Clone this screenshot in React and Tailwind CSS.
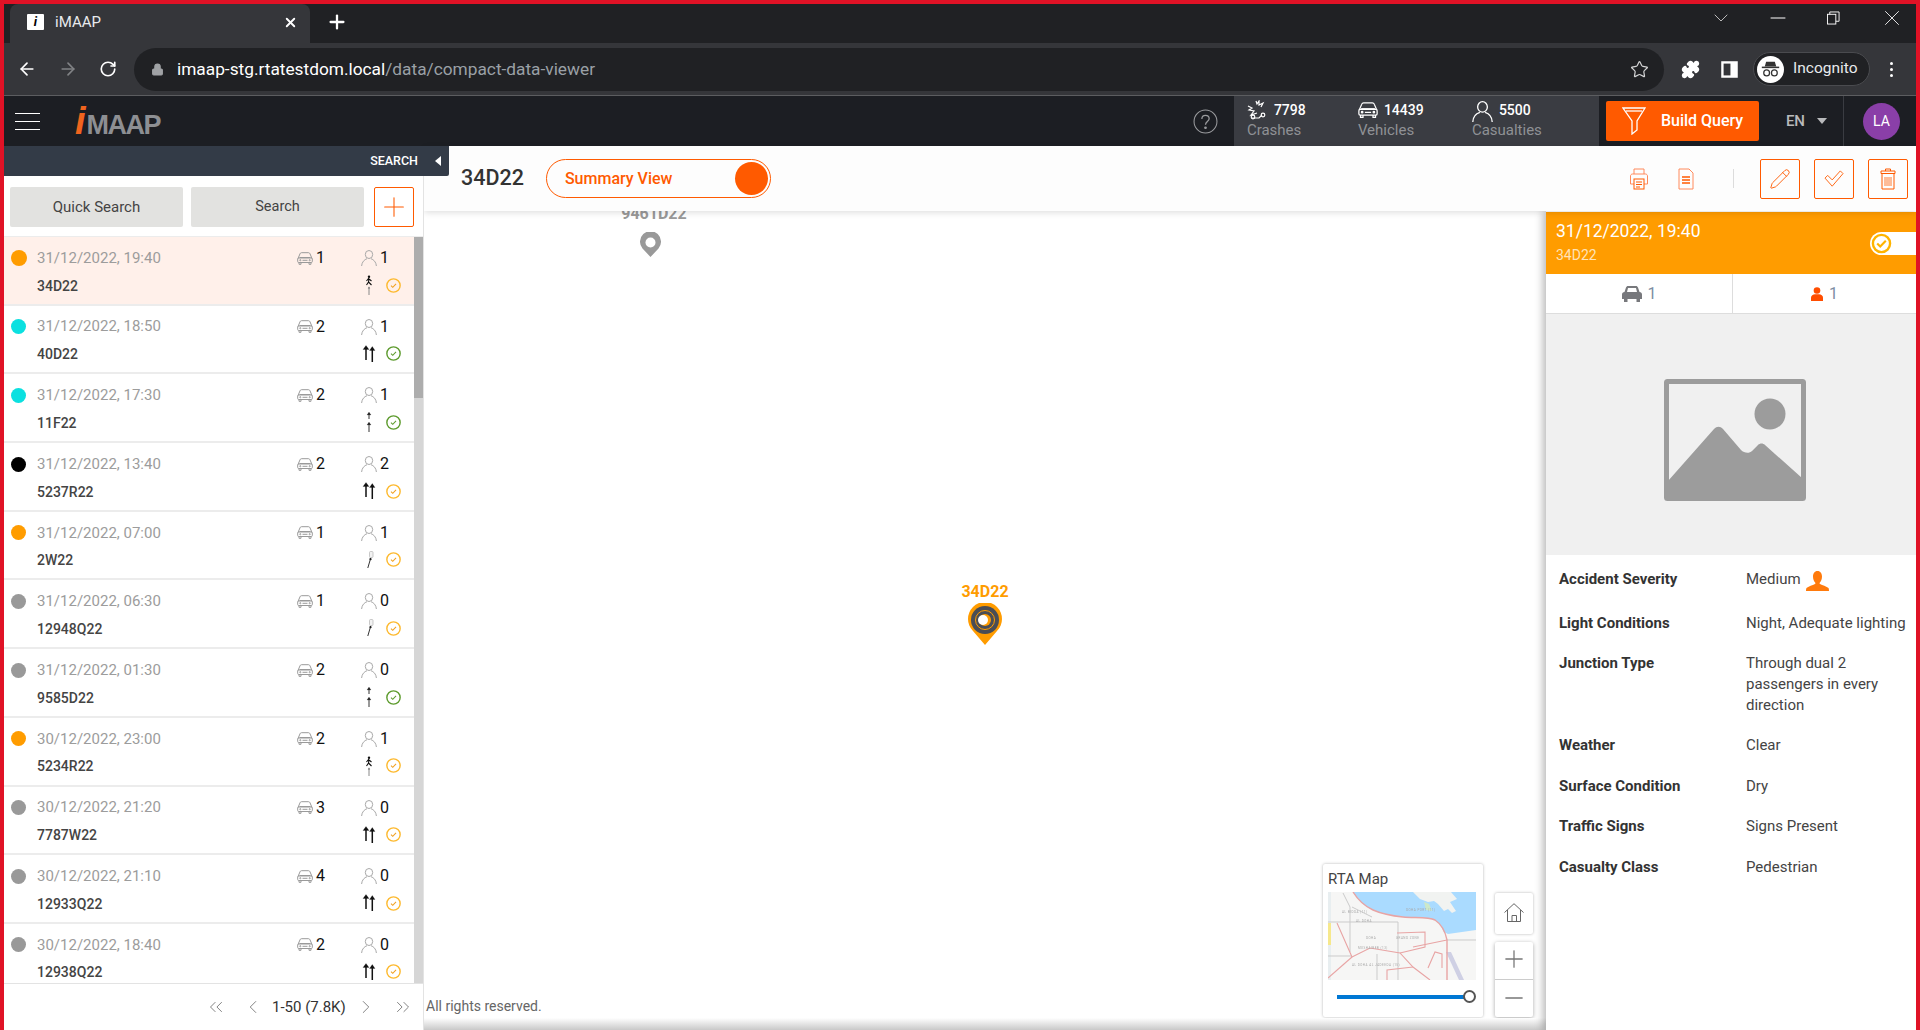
import { ArrowLeft, ArrowRight, RotateCw, Lock, Star, Puzzle, X, Plus, Minus, ChevronDown, ChevronLeft, ChevronRight, ChevronsLeft, ChevronsRight, Pencil } from "lucide-react";

const rows = [
  { dot: "bg-[#ff9c00]", date: "31/12/2022, 19:40", cars: 1, people: 1, id: "34D22", road: "walker", ok: false, active: true },
  { dot: "bg-[#0be0e0]", date: "31/12/2022, 18:50", cars: 2, people: 1, id: "40D22", road: "double", ok: true },
  { dot: "bg-[#0be0e0]", date: "31/12/2022, 17:30", cars: 2, people: 1, id: "11F22", road: "split", ok: true },
  { dot: "bg-black", date: "31/12/2022, 13:40", cars: 2, people: 2, id: "5237R22", road: "double", ok: false },
  { dot: "bg-[#ff9c00]", date: "31/12/2022, 07:00", cars: 1, people: 1, id: "2W22", road: "slant", ok: false },
  { dot: "bg-[#999999]", date: "31/12/2022, 06:30", cars: 1, people: 0, id: "12948Q22", road: "slant", ok: false },
  { dot: "bg-[#999999]", date: "31/12/2022, 01:30", cars: 2, people: 0, id: "9585D22", road: "split", ok: true },
  { dot: "bg-[#ff9c00]", date: "30/12/2022, 23:00", cars: 2, people: 1, id: "5234R22", road: "walker", ok: false },
  { dot: "bg-[#999999]", date: "30/12/2022, 21:20", cars: 3, people: 0, id: "7787W22", road: "double", ok: false },
  { dot: "bg-[#999999]", date: "30/12/2022, 21:10", cars: 4, people: 0, id: "12933Q22", road: "double", ok: false },
  { dot: "bg-[#999999]", date: "30/12/2022, 18:40", cars: 2, people: 0, id: "12938Q22", road: "double", ok: false },
];

const details = [
  ["Light Conditions", "Night, Adequate lighting"],
  ["Junction Type", "Through dual 2 passengers in every direction"],
  ["Weather", "Clear"],
  ["Surface Condition", "Dry"],
  ["Traffic Signs", "Signs Present"],
  ["Casualty Class", "Pedestrian"],
];

function CarOutline({ className, stroke = "#9a9a9a" }) {
  return (
    <svg viewBox="0 0 16 13" className={className} fill="none" stroke={stroke} strokeWidth="1">
      <path d="M1 6.5 3 1.800C3.300 1 3.800.7 4.500.7h7c.7 0 1.200.3 1.500 1.100l2 4.700" />
      <rect x=".7" y="6" width="14.600" height="4.500" rx="1" />
      <path d="M2 10.500v1.800h2v-1.800M12 10.500v1.800h2v-1.800M5.500 8.300h5" />
      <circle cx="3.300" cy="8.200" r=".6" />
      <circle cx="12.700" cy="8.200" r=".6" />
      <path d="M2.500 5.500h11" />
    </svg>
  );
}

function PersonOutline({ className, stroke = "#a8a8a8" }) {
  return (
    <svg viewBox="0 0 16 16" className={className} fill="none" stroke={stroke} strokeWidth="1">
      <ellipse cx="8" cy="4.500" rx="3.700" ry="4" />
      <path d="M.6 16C.8 12 3.500 9.500 6 8.700M15.400 16C15.200 12 12.500 9.500 10 8.700" />
    </svg>
  );
}

function RoadIcon({ type }) {
  if (type === "double") {
    return (
      <svg viewBox="0 0 16 18" className="w-4 h-[18px]" fill="#111" stroke="#111">
        <path d="M2 4.500 5 .5l3 4ZM8.500 5.500l2.800-4 2.700 4Z" strokeWidth=".2" />
        <path d="M5 3v12M11.300 4v13" strokeWidth="1.500" />
      </svg>
    );
  }
  if (type === "split") {
    return (
      <svg viewBox="0 0 16 22" className="w-4 h-[22px]" fill="#222" stroke="#333">
        <path d="M6 4 8 1l2 3ZM6 14l2-3 2 3Z" strokeWidth=".2" />
        <path d="M8 3v5M8 13v8" strokeWidth="1" />
      </svg>
    );
  }
  if (type === "slant") {
    return (
      <svg viewBox="0 0 16 18" className="w-4 h-[18px]">
        <rect x="8.500" y=".5" width="3.500" height="6" rx="1" fill="#f2f2f2" stroke="#bbb" strokeWidth=".8" />
        <circle cx="9.500" cy="8.200" r="1.100" fill="#111" />
        <path d="M9.300 8.500 6.800 17" stroke="#333" strokeWidth="1" fill="none" />
      </svg>
    );
  }
  return (
    <svg viewBox="0 0 16 20" className="w-4 h-5" fill="none" stroke="#111">
      <circle cx="8" cy="1.800" r="1.200" fill="#111" stroke="none" />
      <path d="M8 3.500 7.500 7 5.500 10M7.500 7l3 3M5.500 6l2-2.500 3 2.500" strokeWidth="1.100" />
      <path d="M6.800 13.500 8 11.500l1.200 2Z" fill="#555" stroke="none" />
      <path d="M8 13v7" stroke="#888" strokeWidth="1" />
    </svg>
  );
}

function CheckCircle({ ok }) {
  const c = ok ? "#5d9b2d" : "#fdb92e";
  return (
    <svg viewBox="0 0 16 16" className="w-[15px] h-[15px]" fill="none" stroke={c}>
      <circle cx="8" cy="8" r="7.100" strokeWidth="1.500" />
      <path d="M5.300 8.200 7.200 10 10.700 6.300" strokeWidth="1.100" stroke={ok ? "#5d9b2d" : "#f0a020"} />
    </svg>
  );
}

function Row({ row }) {
  return (
    <div className={`h-[68.7px] shrink-0 border-b-2 border-[#ececec] pl-[7px] pr-[13px] ${row.active ? "bg-[#fff0ea]" : "bg-white"}`}>
      <div className="flex items-center h-[22px] mt-[10px]">
        <div className="w-[26px] shrink-0">
          <div className={`rounded-full ${row.active ? "w-[16px] h-[16px]" : "w-[15px] h-[15px]"} ${row.dot}`} />
        </div>
        <span className="w-[260px] shrink-0 text-[15px] text-[#9c9c9c]">{row.date}</span>
        <CarOutline className="w-4 h-[13px] shrink-0" />
        <span className="w-[48px] pl-[3px] shrink-0 text-[16px] text-[#111]">{row.cars}</span>
        <PersonOutline className="w-4 h-4 shrink-0" />
        <span className="pl-[3px] text-[16px] text-[#111]">{row.people}</span>
      </div>
      <div className="flex items-center h-[22px] mt-[6px] pl-[26px]">
        <span className="text-[14px] font-medium text-[#444]">{row.id}</span>
        <div className="ml-auto -mt-[2px] flex items-center gap-[9px]">
          <RoadIcon type={row.road} />
          <CheckCircle ok={row.ok} />
        </div>
      </div>
    </div>
  );
}

function Sidebar() {
  return (
    <aside className="w-[420px] shrink-0 flex flex-col relative z-20 bg-white border-r border-[#e3e3e3]">
      <div className="w-[445px] h-[30px] shrink-0 bg-[#333b47] flex items-center justify-end pr-[8px] rounded-br-[2px]">
        <span className="text-[12.500px] font-medium text-white">SEARCH</span>
        <span className="ml-[17px] w-0 h-0 border-y-[5px] border-y-transparent border-r-[6px] border-r-white" />
      </div>
      <div className="flex items-center h-[61px] shrink-0 pl-[6px] pt-[2px] border-b border-[#ececec]">
        <button className="w-[173px] h-10 rounded-[2px] bg-[#e2e2e0] text-[15px] text-[#444]">Quick Search</button>
        <button className="w-[173px] h-10 ml-2 rounded-[2px] bg-[#e2e2e0] text-[14.500px] text-[#444]">Search</button>
        <button className="w-10 h-10 ml-[10px] rounded-[2px] border border-[#ff5a00] flex items-center justify-center text-[#ff5a00]">
          <Plus size={32} strokeWidth={0.8} />
        </button>
      </div>
      <div className="flex-1 min-h-0 flex">
        <div className="flex-1 flex flex-col overflow-hidden">
          {rows.map((r) => (
            <Row key={r.id} row={r} />
          ))}
        </div>
        <div className="w-[9px] shrink-0 bg-[#d6d6d6]">
          <div className="h-[161px] bg-[#adadad]" />
        </div>
      </div>
      <div className="h-[47px] shrink-0 border-t border-[#e3e3e3] flex items-center text-[#777]">
        <ChevronsLeft size={22} strokeWidth={1} className="ml-[201px]" />
        <ChevronLeft size={22} strokeWidth={1} className="ml-[15px]" />
        <span className="ml-[8px] text-[15px] text-[#333]">1-50 (7.8K)</span>
        <ChevronRight size={22} strokeWidth={1} className="ml-[9px]" />
        <ChevronsRight size={22} strokeWidth={1} className="ml-[15px]" />
      </div>
    </aside>
  );
}

function BrowserChrome() {
  return (
    <>
      <div className="h-[39px] shrink-0 bg-[#202124] flex items-end pl-[6px] text-white">
        <div className="w-[300px] h-[39px] pb-[3px] bg-[#35363a] rounded-t-[8px] flex items-center pl-[17px]">
          <div className="w-[17px] h-[16px] bg-white rounded-[1px] flex items-center justify-center text-[13px] font-bold italic text-black">i</div>
          <span className="ml-[11px] text-[15px] text-[#e8eaed]">iMAAP</span>
          <X size={15} strokeWidth={3} className="ml-auto mr-[12px]" />
        </div>
        <Plus size={22} strokeWidth={2.500} className="ml-[16px] mb-[10px]" />
        <ChevronDown size={24} strokeWidth={0.9} className="ml-auto mb-[13px] mr-[33px] text-[#ccc]" />
        <Minus size={24} strokeWidth={1} className="mb-[13px] mr-[37px]" />
        <svg viewBox="0 0 14 14" className="w-[13px] h-[14px] mb-[18px] mr-[39px]" fill="none" stroke="white" strokeWidth="1">
          <rect x=".5" y="3" width="9" height="10.500" />
          <path d="M3 3V.5h10v10h-3.500" />
        </svg>
        <X size={26} strokeWidth={0.8} className="mb-[12px] mr-[11px]" />
      </div>
      <div className="h-[53px] shrink-0 bg-[#35363a] border-b border-[#5c5d60] flex items-center text-white">
        <ArrowLeft size={20} className="ml-[13px]" />
        <ArrowRight size={20} className="ml-[21px] text-[#808285]" />
        <RotateCw size={18} strokeWidth={2.200} className="ml-[21px]" />
        <div className="ml-[17px] w-[1530px] h-[43px] shrink-0 rounded-full bg-[#202124] flex items-center pl-[17px]">
          <Lock size={13} fill="#a0a2a5" stroke="#a0a2a5" />
          <span className="ml-[13px] mt-[2px] text-[17.300px] text-white">imaap-stg.rtatestdom.local<span className="text-[#9aa0a6]">/data/compact-data-viewer</span></span>
          <Star size={19} strokeWidth={1.500} className="ml-auto mr-[15px] text-[#d5d6d7]" />
        </div>
        <Puzzle size={19} fill="white" className="ml-[17px]" />
        <svg viewBox="0 0 18 18" className="ml-[21px] w-[17px] h-[17px]" fill="none" stroke="white" strokeWidth="2.500">
          <rect x="1.500" y="1.500" width="15" height="15" />
          <rect x="10" y="1.500" width="6.500" height="15" fill="white" stroke="none" />
        </svg>
        <div className="ml-[15px] w-[117px] h-[34px] rounded-full border border-[#4a4b4f] bg-[#202124] flex items-center pl-[3px]">
          <svg viewBox="0 0 28 28" className="w-[27px] h-[27px]">
            <circle cx="14" cy="14" r="14" fill="white" />
            <path d="M8 11 9.500 6h9l1.500 5Z" fill="#333" />
            <rect x="5" y="11" width="18" height="1.600" fill="#333" />
            <circle cx="10" cy="17.500" r="3" fill="none" stroke="#333" strokeWidth="1.300" />
            <circle cx="18" cy="17.500" r="3" fill="none" stroke="#333" strokeWidth="1.300" />
          </svg>
          <span className="ml-[9px] text-[15.500px] text-[#e8eaed]">Incognito</span>
        </div>
        <div className="ml-[20px] flex flex-col gap-[3px]">
          <span className="w-[3px] h-[3px] rounded-full bg-white" />
          <span className="w-[3px] h-[3px] rounded-full bg-white" />
          <span className="w-[3px] h-[3px] rounded-full bg-white" />
        </div>
      </div>
    </>
  );
}

function Stat({ icon, value, label, className }) {
  return (
    <div className={`flex flex-col ${className}`}>
      <div className="flex items-center h-[20px] mt-[4px]">
        {icon}
        <span className="text-[14px] font-medium text-white">{value}</span>
      </div>
      <span className="text-[15px] leading-[20px] text-[#8f9195]">{label}</span>
    </div>
  );
}

function Navbar() {
  return (
    <div className="h-[50px] shrink-0 bg-[#1c1e23] flex items-center pr-[16px]">
      <div className="ml-[11px] w-[25px] flex flex-col gap-[7px]">
        <span className="h-px bg-white" />
        <span className="h-px bg-white" />
        <span className="h-px bg-white" />
      </div>
      <div className="ml-[35px] flex items-baseline [font-family:'Liberation_Sans',sans-serif] font-bold leading-none">
        <span className="italic text-[38px] text-[#f0641e] mr-[1px]">i</span>
        <span className="text-[27px] tracking-[-1.500px] text-[#8d8f93]">MAAP</span>
      </div>
      <svg viewBox="0 0 24 24" className="ml-auto mr-[16px] w-[25px] h-[25px]" fill="none" stroke="#9a9b9e" strokeWidth="1">
        <circle cx="12" cy="12" r="11" />
        <path d="M8.500 9.500C8.500 7.500 10 6 12 6s3.500 1.500 3.500 3.300c0 2.500-3.500 3-3.500 5.700" strokeWidth="1.200" />
        <circle cx="12" cy="18" r=".8" fill="#9a9b9e" />
      </svg>
      <div className="w-[365px] h-full bg-[#3a3c42] flex pl-[13px]">
        <Stat
          className="w-[111px]"
          value="7798"
          label="Crashes"
          icon={
            <svg viewBox="0 0 20 20" className="w-5 h-5 mr-[7px]" fill="none" stroke="white" strokeWidth="1.200">
              <path d="M9 1l1 3 2-3 0 4 4-2-2 4M1 6l4 2-3 2 5 1-3 4 6-2M5 18h7l3-3" />
              <circle cx="6" cy="17" r="1.800" />
              <circle cx="16" cy="15" r="1.800" />
            </svg>
          }
        />
        <Stat className="w-[114px]" value="14439" label="Vehicles" icon={<CarOutline className="w-[20px] h-[18px] mr-[6px]" stroke="white" />} />
        <Stat className="w-[100px]" value="5500" label="Casualties" icon={<PersonOutline className="w-[21px] h-[21px] mr-[6px] -mb-[3px]" stroke="white" />} />
      </div>
      <button className="ml-[7px] w-[153px] h-10 rounded-[2px] bg-[#ff5a00] flex items-center text-white">
        <svg viewBox="0 0 24 28" className="ml-[16px] w-6 h-[28px]" fill="none" stroke="white" strokeWidth="1.300">
          <path d="M1 1h22L15 14v9l-5 4V14Z" />
          <path d="M4 4h16" />
        </svg>
        <span className="ml-[15px] text-[16px] font-medium">Build Query</span>
      </button>
      <span className="ml-[27px] text-[15px] font-medium text-[#b9babc]">EN</span>
      <span className="ml-[12px] w-0 h-0 border-x-[5px] border-x-transparent border-t-[6px] border-t-[#b9babc]" />
      <div className="ml-[16px] h-full border-l border-[#3a3c42] pl-[19px] flex items-center">
        <div className="w-[37px] h-[37px] rounded-full bg-[#8a3fa8] flex items-center justify-center text-[14px] text-white">LA</div>
      </div>
    </div>
  );
}

function OutlineButton({ children }) {
  return <button className="w-10 h-10 rounded-[2px] border border-[#ff5a00] flex items-center justify-center">{children}</button>;
}

function ViewerHeader() {
  return (
    <div className="h-[65px] shrink-0 bg-[#fdfdfd] shadow-[0_2px_6px_rgba(0,0,0,0.12)] relative z-10 flex items-center pl-[37px]">
      <span className="text-[21.500px] font-medium text-[#333]">34D22</span>
      <div className="ml-[22px] w-[225px] h-[39px] rounded-full border border-[#ff5a00] flex items-center pl-[18px] pr-[2px]">
        <span className="text-[16px] font-medium text-[#ff5a00]">Summary View</span>
        <span className="ml-auto w-[33px] h-[33px] rounded-full bg-[#ff5a00]" />
      </div>
      <svg viewBox="0 0 20 22" className="ml-auto w-5 h-[22px]" fill="none" stroke="#ff8a5c" strokeWidth="1">
        <path d="M5 6V1h10v5M5 16H1.500V8c0-1 .8-2 2-2h13c1.200 0 2 1 2 2v8H15" />
        <rect x="5" y="11" width="10" height="10" stroke="#ff5a00" />
        <path d="M7 14h6M7 16.500h6M7 19h4" stroke="#ff5a00" />
      </svg>
      <svg viewBox="0 0 16 22" className="ml-[29px] w-4 h-[22px]" fill="none" stroke="#ff8a5c" strokeWidth="1">
        <path d="M1 1h10l4 4v16H1Z" />
        <path d="M4 9h8M4 12h8M4 15h8" stroke="#ff5a00" strokeWidth="1.300" />
      </svg>
      <span className="ml-[39px] w-px h-[19px] bg-[#dcdcdc]" />
      <div className="ml-[26px] mr-[8px] flex gap-[14px]">
        <OutlineButton>
          <Pencil size={22} strokeWidth={1} color="#ff5a00" />
        </OutlineButton>
        <OutlineButton>
          <svg viewBox="0 0 22 20" className="w-[20px] h-[18px]" fill="none" stroke="#ff5a00" strokeWidth="1">
            <path d="M1 9l3-3 5 5 9-10 3 3-12 14Z" />
          </svg>
        </OutlineButton>
        <OutlineButton>
          <svg viewBox="0 0 16 22" className="w-4 h-[22px]" fill="none" stroke="#ff5a00" strokeWidth="1">
            <path d="M5.500 3V1h5v2M1 3h14v2.500H1ZM2 5.500V21h12V5.500" />
            <path d="M5 9v9M7 9v9M9 9v9M11 9v9" strokeWidth=".8" />
          </svg>
        </OutlineButton>
      </div>
    </div>
  );
}

function MiniMap() {
  return (
    <svg viewBox="0 0 148 88" className="w-[148px] h-[88px] block bg-[#f6f6f5] blur-[0.4px]">
      <path d="M25 0C30 8 36 14 45 18c9 4 20 6 30 7 12 1 26 0 32 3 5 3 7 8 9 12l4 2 28-4V0Z" fill="#aadbff" />
      <path d="M85 0 92 7l8 3 6-1 4 3 6 7 4-2 4 4 4-2-6-9 7-3-6-7Z" fill="#f1f3f1" />
      <path d="M96 10 98 18l6 1-3-7Z" fill="#cde8c8" />
      <path d="M131 88 118 60h5l13 28Z" fill="#cfd0e4" />
      <rect x="0" y="0" width="3" height="88" fill="#e8eef0" />
      <rect x="0" y="31" width="3" height="22" fill="#f6e88c" />
      <g fill="none" stroke="#cbcbcb" strokeWidth="1">
        <path d="M0 30h70v31M15 1l7 14v45M119 48h29M49 88V62M70 61v27M24 15l20 10M0 64h24" />
      </g>
      <g fill="none" stroke="#e8a4a4" strokeWidth="1.100">
        <path d="M25 0C30 8 36 14 45 18c9 4 20 6 30 7 12 1 26 0 32 3 6 4 10 10 12 20v40" strokeWidth="1.400" />
        <path d="M9 31 24 65l18-9 30 5 13 14 17 13" />
        <path d="M24 65 0 86" />
        <path d="M69 41 97 40v15L72 61" />
        <path d="M85 55l34-7" />
        <path d="M59 88V78l26-3" />
        <path d="M100 76l7-16 7 2v14" />
      </g>
      <g fill="#a8a8a8" fontSize="3" fontFamily="Roboto, sans-serif" letterSpacing=".5">
        <text x="14" y="21">AL BIDDA (11)</text>
        <text x="28" y="30">AL DOHA</text>
        <text x="38" y="47">DOHA</text>
        <text x="68" y="47">GRAND ZONE</text>
        <text x="30" y="57">MUSHAIREB (13)</text>
        <text x="24" y="74">AL DOHA AL JADEEDA (15)</text>
        <text x="78" y="19">DOHA PORT (11)</text>
      </g>
    </svg>
  );
}

function MapArea() {
  return (
    <div className="flex-1 relative bg-white overflow-hidden">
      <div className="absolute left-[192px] top-[-9px] w-[76px] text-center text-[16px] font-bold text-[#999]">9461D22</div>
      <svg viewBox="0 0 21 25" className="absolute left-[216px] top-[21px] w-[21px] h-[25px]">
        <path d="M10.500 25 2.500 16.500A10.500 10.500 0 1 1 18.500 16.500Z" fill="#999" />
        <circle cx="10.500" cy="10.500" r="5" fill="white" />
      </svg>

      <div className="absolute left-[531px] top-[369px] w-[60px] text-center text-[16px] font-bold text-[#ff9c00]">34D22</div>
      <svg viewBox="0 0 34 42" className="absolute left-[544px] top-[392px] w-[34px] h-[42px]">
        <path d="M17 42 5 28A17 17 0 1 1 29 28Z" fill="#ff9c00" />
        <circle cx="17" cy="17" r="14" fill="#4a4d55" />
        <circle cx="17" cy="17" r="9.500" fill="none" stroke="#ff9c00" strokeWidth="1" />
        <circle cx="17" cy="17" r="6" fill="#ff9c00" />
        <circle cx="15" cy="17" r="5" fill="white" />
      </svg>

      <div className="absolute left-[899px] top-[653px] w-[160px] h-[153px] bg-white rounded-[2px] shadow-[0_0_3px_rgba(0,0,0,0.3)] pl-[5px] pt-[5px]">
        <div className="text-[15px] leading-[20px] text-[#444]">RTA Map</div>
        <div className="mt-[3px]">
          <MiniMap />
        </div>
        <div className="relative ml-[9px] mt-[15px] w-[134px] h-[4px] bg-[#0078d4]">
          <span className="absolute right-[-5px] top-[-5px] w-[13px] h-[13px] rounded-full border-2 border-[#555] bg-white" />
        </div>
      </div>

      <div className="absolute left-[1071px] top-[682px] w-[38px] h-[41px] bg-white rounded-[2px] shadow-[0_0_3px_rgba(0,0,0,0.3)] flex items-center justify-center">
        <svg viewBox="0 0 20 19" className="w-5 h-[19px] mb-[2px]" fill="none" stroke="#666" strokeWidth="1">
          <path d="M.5 9.500 10 .7l9.500 8.800" />
          <path d="M3.500 7v11.500h13V7" />
          <path d="M8 18.500v-6h4.500v6" />
        </svg>
      </div>
      <div className="absolute left-[1071px] top-[731px] w-[38px] h-[75px] bg-white rounded-[2px] shadow-[0_1px_4px_rgba(0,0,0,0.35)] flex flex-col text-[#777]">
        <div className="h-[38px] pb-[3px] border-b border-[#ccc] flex items-center justify-center">
          <Plus size={28} strokeWidth={1.100} />
        </div>
        <div className="flex-1 pb-[2px] flex items-center justify-center">
          <Minus size={28} strokeWidth={1.100} />
        </div>
      </div>

      <div className="absolute left-[2px] bottom-[14px] text-[14px] leading-[20px] text-[#666]">All rights reserved.</div>
      <div className="absolute left-0 right-0 bottom-0 h-[12px] bg-gradient-to-b from-white to-[#c9c9c9]" />
    </div>
  );
}

function DetailPanel() {
  return (
    <div className="w-[370px] shrink-0 bg-white pt-px flex flex-col relative z-[5] shadow-[-3px_0_8px_rgba(0,0,0,0.28)]">
      <div className="h-[62px] shrink-0 bg-[#ff9c00] flex relative pl-[10px] pt-[8px]">
        <div>
          <div className="text-[17.500px] leading-[22px] text-white">31/12/2022, 19:40</div>
          <div className="text-[14px] leading-[20px] mt-[3px] text-[#ffe3b8]">34D22</div>
        </div>
        <div className="absolute right-0 top-[20px] w-[46px] h-[23px] rounded-l-full bg-white flex items-center pl-px">
          <svg viewBox="0 0 22 22" className="w-[21px] h-[21px]" fill="none" stroke="#ffb400">
            <circle cx="11" cy="11" r="9" strokeWidth="2.500" />
            <path d="M6.500 11l3.200 3.200 5.800-6" strokeWidth="2.200" />
          </svg>
        </div>
      </div>
      <div className="h-10 shrink-0 border-b border-[#ddd] flex">
        <div className="w-[187px] border-r border-[#ddd] flex items-center justify-center gap-[6px] text-[16px] text-[#7d8da3]">
          <svg viewBox="0 0 20 16" className="w-5 h-4" fill="#77787c">
            <path d="M4 1.500C4.400.6 5 0 6 0h8c1 0 1.600.6 2 1.500L17.500 6C19 6.300 20 7 20 8.500V13h-2v3h-3.500v-3h-9v3H2v-3H0V8.500C0 7 1 6.300 2.500 6ZM5 6h10l-1-4H6Z" fillRule="evenodd" />
          </svg>
          1
        </div>
        <div className="flex-1 flex items-center justify-center gap-[6px] text-[16px] text-[#7d8da3]">
          <svg viewBox="0 0 12 14" className="w-3 h-[14px]" fill="#ff4d00">
            <circle cx="6" cy="3.500" r="3.300" />
            <path d="M0 14v-3.500C0 8.500 2 7.500 4 7.300h4c2 .2 4 1.200 4 3.200V14Z" />
          </svg>
          1
        </div>
      </div>
      <div className="h-[241px] shrink-0 bg-[#f0f0f0] flex items-center justify-center">
        <svg viewBox="0 0 142 122" className="w-[142px] h-[122px] mt-[11px] ml-[7px]">
          <rect x="2.500" y="2.500" width="137" height="117" rx="1" fill="none" stroke="#9c9c9c" strokeWidth="5" />
          <path d="M4 102 50 50c3-3 6-3 9 0l18 21c3 3 8 4 11 1l6-6c2-2 5-2 7 0l37 33v21H4Z" fill="#9c9c9c" />
          <circle cx="106" cy="35" r="15.500" fill="#9c9c9c" />
        </svg>
      </div>
      <div className="pl-[13px] pt-[14px] text-[15px] leading-[20px]">
        <div className="flex mb-[24px]">
          <div className="w-[187px] shrink-0 font-bold text-[#333]">Accident Severity</div>
          <div className="flex items-center gap-[5px] text-[#444]">
            Medium
            <svg viewBox="0 0 23 20" className="w-[23px] h-5 -mb-[4px]" fill="#ff7a0c">
              <path d="M11.500 0c3 0 4.500 2.500 4.500 5.500 0 3-1 5-2.500 6.500 0 2 6 2.500 9 5 .5.500.5 3 .5 3H0s0-2.500.5-3c3-2.500 9-3 9-5C8 10.500 7 8.500 7 5.500 7 2.500 8.500 0 11.500 0Z" />
            </svg>
          </div>
        </div>
        <div className="flex flex-col gap-[19.500px]">
          {details.map(([k, v]) => (
            <div key={k} className={`flex ${k === "Junction Type" ? "-mt-[1px]" : ""}`}>
              <div className="w-[187px] shrink-0 font-bold text-[#333]">{k}</div>
              <div className="w-[165px] shrink-0 leading-[21px] text-[#444]">{v}</div>
            </div>
          ))}
        </div>
      </div>
    </div>
  );
}

export default function App() {
  return (
    <div className="h-[1030px] flex flex-col overflow-hidden border-t-4 border-x-4 border-[#e01226] bg-white [font-family:Roboto,sans-serif]">
      <BrowserChrome />
      <Navbar />
      <div className="flex-1 min-h-0 flex">
        <Sidebar />
        <div className="flex-1 min-w-0 flex flex-col">
          <ViewerHeader />
          <div className="flex-1 min-h-0 flex">
            <MapArea />
            <DetailPanel />
          </div>
        </div>
      </div>
    </div>
  );
}
